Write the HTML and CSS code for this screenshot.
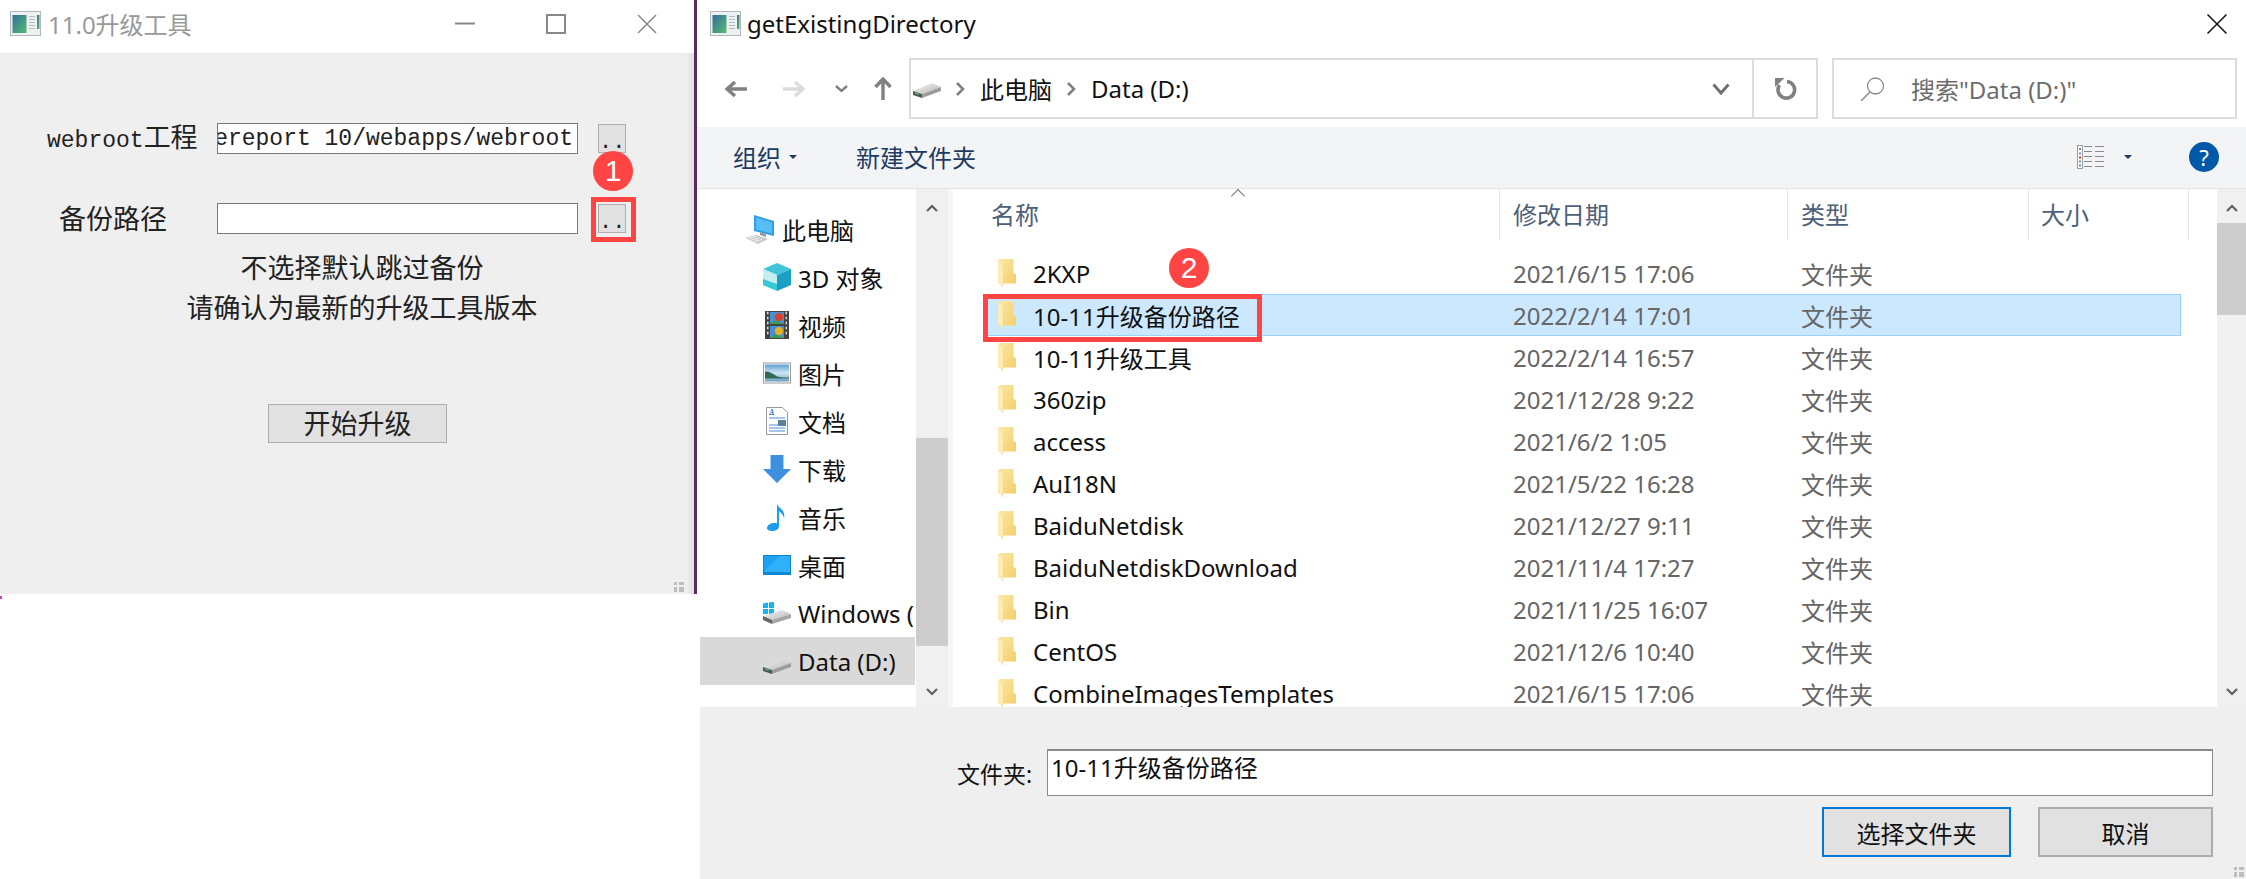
FILE: index.html
```html
<!DOCTYPE html>
<html lang="zh-CN">
<head>
<meta charset="utf-8">
<title>升级工具</title>
<link rel="stylesheet" href="styles.css">
</head>
<body>
<svg class="defs" aria-hidden="true">
  <defs>
    <linearGradient id="folderGrad" x1="0" y1="0" x2="1" y2="1">
      <stop offset="0" stop-color="#fbe7a6"/>
      <stop offset="1" stop-color="#f3cf6a"/>
    </linearGradient>
    <linearGradient id="appGrad" x1="0" y1="0" x2="1" y2="1">
      <stop offset="0" stop-color="#2f6f9c"/>
      <stop offset="1" stop-color="#58bb70"/>
    </linearGradient>
    <linearGradient id="skyGrad" x1="0" y1="0" x2="0" y2="1">
      <stop offset="0" stop-color="#5f9fd0"/>
      <stop offset="0.5" stop-color="#cfe6f4"/>
      <stop offset="1" stop-color="#6a9cc0"/>
    </linearGradient>
    <linearGradient id="driveTop" x1="0" y1="0" x2="1" y2="1">
      <stop offset="0" stop-color="#f2f2f2"/>
      <stop offset="1" stop-color="#b9b9b9"/>
    </linearGradient>
    <symbol id="app" viewBox="0 0 31 25">
      <rect x="0.5" y="0.5" width="30" height="24" fill="#eef1f2" stroke="#b0b8bc"/>
      <rect x="2.500" y="4" width="14" height="18" fill="url(#appGrad)"/>
      <rect x="27" y="4" width="2.500" height="14" fill="url(#appGrad)"/>
      <path d="M19 5.500h6M19 8.500h6M19 11.500h6M19 14.500h6M19 17.500h6" stroke="#b3bcc0" stroke-width="1.200"/>
    </symbol>
    <symbol id="folder" viewBox="0 0 18 28">
      <path d="M1 0h14.500v14l2.500 1v9.500H5z" fill="url(#folderGrad)"/>
      <path d="M0 1l5 2.500V25l-0.800 3L3 25l-3-1z" fill="#fdeeb8" stroke="#f3d98a" stroke-width="0.500"/>
    </symbol>
    <symbol id="drive" viewBox="0 0 28 15">
      <path d="M0 8L19 0l9 4-19 7z" fill="url(#driveTop)"/>
      <path d="M0 8l9 3v4l-9-3z" fill="#555"/>
      <path d="M9 11l19-7v4L9 15z" fill="#9c9c9c"/>
      <path d="M2 10l4 1.2" stroke="#3fbf5f" stroke-width="1.4"/>
    </symbol>
  </defs>
</svg>

<div class="desktop">
  <section class="tool">
    <header class="titlebar">
      <svg class="app-icon"><use href="#app"/></svg>
      <span class="tool-title">11.0升级工具</span>
      <div class="win-controls">
        <svg class="ctl" viewBox="0 0 20 20"><path d="M0 9.5h20" stroke="#888" stroke-width="2"/></svg>
        <svg class="ctl" viewBox="0 0 20 20"><rect x="1" y="1" width="18" height="18" fill="none" stroke="#888" stroke-width="2"/></svg>
        <svg class="ctl" viewBox="0 0 20 20"><path d="M1 1l18 18M19 1L1 19" stroke="#888" stroke-width="1.5"/></svg>
      </div>
    </header>
    <div class="tool-body">
      <div class="form-row">
        <label class="form-label"><span class="latin">webroot</span>工程</label>
        <div class="path-input"><span class="latin path-text">finereport 10/webapps/webroot</span></div>
        <button class="dots">..</button>
      </div>
      <div class="form-row second">
        <label class="form-label indent">备份路径</label>
        <div class="path-input"></div>
        <div class="dots-wrap">
          <button class="dots">..</button>
          <span class="red-box box-dots"></span>
          <span class="badge badge-one">1</span>
        </div>
      </div>
      <div class="hints">
        <p>不选择默认跳过备份</p>
        <p>请确认为最新的升级工具版本</p>
      </div>
      <button class="start">开始升级</button>
      <div class="grip tool-grip"><i></i><i></i><i></i><i></i></div>
    </div>
  </section>

  <section class="dialog">
    <header class="dlg-title">
      <svg class="app-icon"><use href="#app"/></svg>
      <span class="dlg-name">getExistingDirectory</span>
      <svg class="dlg-close" viewBox="0 0 20 20"><path d="M0.5 0.5l19 19M19.5 0.5l-19 19" stroke="#111" stroke-width="1.5"/></svg>
    </header>

    <div class="navbar">
      <div class="nav-btns">
        <svg class="nav-arrow" viewBox="0 0 22 18"><path d="M10 2L2 9l8 7M2 9h20" fill="none" stroke="#808080" stroke-width="3.4"/></svg>
        <svg class="nav-arrow fwd" viewBox="0 0 22 18"><path d="M12 2l8 7-8 7M20 9H0" fill="none" stroke="#dcdcdc" stroke-width="3.4"/></svg>
        <svg class="nav-chev" viewBox="0 0 13 8"><path d="M1 1l5.500 5L12 1" fill="none" stroke="#808080" stroke-width="2.400"/></svg>
        <svg class="nav-up" viewBox="0 0 18 23"><path d="M1.500 10L9 2l7.500 8M9 2v21" fill="none" stroke="#808080" stroke-width="3.400"/></svg>
      </div>
      <div class="address">
        <svg class="addr-drive"><use href="#drive"/></svg>
        <svg class="crumb-sep" viewBox="0 0 10 14"><path d="M2 1l6 6-6 6" fill="none" stroke="#808080" stroke-width="2.600"/></svg>
        <span class="crumb">此电脑</span>
        <svg class="crumb-sep" viewBox="0 0 10 14"><path d="M2 1l6 6-6 6" fill="none" stroke="#808080" stroke-width="2.600"/></svg>
        <span class="crumb">Data (D:)</span>
        <svg class="addr-drop" viewBox="0 0 18 12"><path d="M1.500 1.500L9 10l7.500-8.500" fill="none" stroke="#707070" stroke-width="3"/></svg>
        <div class="addr-refresh">
          <svg viewBox="0 0 22 22" class="refresh"><path d="M12 3.500A8.300 8.300 0 1 1 4.500 7" fill="none" stroke="#808080" stroke-width="3.600"/><path d="M0 0h9.500L0 9z" fill="#808080"/></svg>
        </div>
      </div>
      <div class="search">
        <svg class="magnifier" viewBox="0 0 25 24"><circle cx="15.500" cy="9" r="8" fill="none" stroke="#8a8a8a" stroke-width="1.300"/><path d="M10 15L1 24" stroke="#8a8a8a" stroke-width="1.500"/></svg>
        <span>搜索"Data (D:)"</span>
      </div>
    </div>

    <div class="toolbar">
      <span class="tool-btn">组织</span>
      <i class="caret"></i>
      <span class="tool-btn new-folder">新建文件夹</span>
      <svg class="view-icon" viewBox="0 0 27 24">
        <rect x="0.500" y="0.500" width="5" height="23" fill="#fff" stroke="#9a9a9a"/>
        <rect x="2" y="3" width="2" height="2" fill="#6c8aa8"/><rect x="2" y="7.500" width="2" height="2" fill="#6c8aa8"/><rect x="2" y="11.500" width="2" height="2" fill="#c0392b"/><rect x="2" y="15.500" width="2" height="2" fill="#6c8aa8"/><rect x="2" y="19.500" width="2" height="2" fill="#6c8aa8"/>
        <path d="M7 1.500h8M18 1.500h9M7 6.500h8M18 6.500h9M7 11.500h8M18 11.500h9M7 16.500h8M18 16.500h9M7 21.500h8M18 21.500h9" stroke="#8a8a8a"/>
      </svg>
      <i class="caret view-caret"></i>
      <span class="help">?</span>
    </div>

    <div class="panes">
      <nav class="tree">
        <div class="tree-item root">
          <svg class="tree-icon pc" viewBox="0 0 31 30"><path d="M9 1l20 6v15L9 17z" fill="#2f9fe8"/><path d="M11 3.500l16 5v11l-16-4z" fill="#56bdf5"/><path d="M15 18l6 2v3l-6-2z" fill="#9a9a9a"/><path d="M0 24l11-3 12 4-10 5z" fill="#c9c9c9"/><path d="M3 24.500l8-2M6 26l8-2M9 27.500l8-2" stroke="#f2f2f2"/></svg>
          <span>此电脑</span>
        </div>
        <div class="tree-item">
          <svg class="tree-icon" viewBox="0 0 28 28"><path d="M14 0l14 6-14 6L0 6z" fill="#3fc4d9"/><path d="M0 6l14 6v16L0 22z" fill="#c6eef0"/><path d="M14 12l14-6v16l-14 6z" fill="#1b9fc4"/><path d="M0 16l14 5v7L0 22z" fill="#35c9d4"/></svg>
          <span>3D 对象</span>
        </div>
        <div class="tree-item">
          <svg class="tree-icon" viewBox="0 0 28 28"><rect x="2" width="24" height="28" fill="#444"/><path d="M4 2h1.500M4 7h1.500M4 12h1.500M4 17h1.500M4 22h1.500M22.500 2H24M22.500 7H24M22.500 12H24M22.500 17H24M22.500 22H24" stroke="#ddd" stroke-width="2.500"/><rect x="7" y="1" width="14" height="12" fill="#4a90d0"/><rect x="7" y="15" width="14" height="12" fill="#4a90d0"/><circle cx="16" cy="6" r="4" fill="#e0402a"/><circle cx="16" cy="20" r="4" fill="#e8b020"/><path d="M7 13l5-4 9 4zM7 27l5-4 9 4z" fill="#3f9b4f"/></svg>
          <span>视频</span>
        </div>
        <div class="tree-item">
          <svg class="tree-icon" viewBox="0 0 28 21"><rect x="0.500" y="0.500" width="27" height="20" fill="#fff" stroke="#999"/><rect x="2" y="2" width="24" height="17" fill="url(#skyGrad)"/><path d="M2 9c5 0 8 2 12 5 4 1 8 1 12 1v1H2z" fill="#2f6a55"/></svg>
          <span>图片</span>
        </div>
        <div class="tree-item">
          <svg class="tree-icon" viewBox="0 0 22 28"><path d="M0.500 0.500h16l5 5v22H0.500z" fill="#fff" stroke="#999"/><path d="M3 7.500h5M3 11h16M3 21h16M3 24h16M3 18h9" stroke="#4a90d0" stroke-width="1"/><text class="doc-a" x="3" y="8">A</text><rect x="12" y="13" width="8" height="6" fill="#5b8296"/></svg>
          <span>文档</span>
        </div>
        <div class="tree-item">
          <svg class="tree-icon" viewBox="0 0 26 26"><path d="M7 0h12v13h7L13 26 0 13h7z" fill="#3d8fe0"/></svg>
          <span>下载</span>
        </div>
        <div class="tree-item">
          <svg class="tree-icon" viewBox="0 0 20 28"><path d="M10 0c0 5 9 6 7 15-1-4-4-6-5-7v15c0 3-3 5-7 5-3 0-5-1-5-3 0-3 4-5 7-5 1 0 2 0 3 .5z" fill="#1e9bea"/></svg>
          <span>音乐</span>
        </div>
        <div class="tree-item">
          <svg class="tree-icon" viewBox="0 0 28 20"><rect width="28" height="20" fill="#0f86d8"/><rect x="1" y="1" width="26" height="16" fill="#1ba2f5"/><path d="M1 17L16 1h11v16z" fill="#2fb0fa"/></svg>
          <span>桌面</span>
        </div>
        <div class="tree-item clip">
          <svg class="tree-icon" viewBox="0 0 28 22"><path d="M0 1.500l5-1v5.500H0zM6 .300L11 0v6H6zM0 7h5v5H0zM6 7h5v5.500L6 12z" fill="#13b4ea"/><path d="M0 14l19-6 9 4-19 6z" fill="url(#driveTop)"/><path d="M0 14l9 4v4l-9-4z" fill="#666"/><path d="M9 18l19-6v4L9 22z" fill="#a5a5a5"/></svg>
          <span>Windows (C:)</span>
        </div>
        <div class="tree-item active">
          <svg class="tree-icon drive-icon"><use href="#drive"/></svg>
          <span>Data (D:)</span>
        </div>
      </nav>
      <div class="vscroll tree-scroll">
        <svg class="sb-arrow" viewBox="0 0 12 8"><path d="M1 7l5-5 5 5" fill="none" stroke="#606060" stroke-width="2.200"/></svg>
        <div class="track"><span class="thumb tree-thumb"></span></div>
        <svg class="sb-arrow" viewBox="0 0 12 8"><path d="M1 1l5 5 5-5" fill="none" stroke="#606060" stroke-width="2.200"/></svg>
      </div>

      <div class="files">
        <div class="file-head">
          <span class="sort-mark"></span>
          <div class="col col-name">名称</div>
          <div class="col col-date">修改日期</div>
          <div class="col col-type">类型</div>
          <div class="col col-size">大小</div>
        </div>
        <div class="rows">
          <div class="row"><span class="name"><svg class="folder"><use href="#folder"/></svg>2KXP</span><span class="date">2021/6/15 17:06</span><span class="kind">文件夹</span></div>
          <div class="row selected"><span class="name"><svg class="folder"><use href="#folder"/></svg>10-11升级备份路径</span><span class="date">2022/2/14 17:01</span><span class="kind">文件夹</span><span class="red-box box-row"></span><span class="badge badge-two">2</span></div>
          <div class="row"><span class="name"><svg class="folder"><use href="#folder"/></svg>10-11升级工具</span><span class="date">2022/2/14 16:57</span><span class="kind">文件夹</span></div>
          <div class="row"><span class="name"><svg class="folder"><use href="#folder"/></svg>360zip</span><span class="date">2021/12/28 9:22</span><span class="kind">文件夹</span></div>
          <div class="row"><span class="name"><svg class="folder"><use href="#folder"/></svg>access</span><span class="date">2021/6/2 1:05</span><span class="kind">文件夹</span></div>
          <div class="row"><span class="name"><svg class="folder"><use href="#folder"/></svg>AuI18N</span><span class="date">2021/5/22 16:28</span><span class="kind">文件夹</span></div>
          <div class="row"><span class="name"><svg class="folder"><use href="#folder"/></svg>BaiduNetdisk</span><span class="date">2021/12/27 9:11</span><span class="kind">文件夹</span></div>
          <div class="row"><span class="name"><svg class="folder"><use href="#folder"/></svg>BaiduNetdiskDownload</span><span class="date">2021/11/4 17:27</span><span class="kind">文件夹</span></div>
          <div class="row"><span class="name"><svg class="folder"><use href="#folder"/></svg>Bin</span><span class="date">2021/11/25 16:07</span><span class="kind">文件夹</span></div>
          <div class="row"><span class="name"><svg class="folder"><use href="#folder"/></svg>CentOS</span><span class="date">2021/12/6 10:40</span><span class="kind">文件夹</span></div>
          <div class="row"><span class="name"><svg class="folder"><use href="#folder"/></svg>CombineImagesTemplates</span><span class="date">2021/6/15 17:06</span><span class="kind">文件夹</span></div>
        </div>
      </div>
      <div class="vscroll list-scroll">
        <svg class="sb-arrow" viewBox="0 0 12 8"><path d="M1 7l5-5 5 5" fill="none" stroke="#606060" stroke-width="2.200"/></svg>
        <div class="track"><span class="thumb list-thumb"></span></div>
        <svg class="sb-arrow" viewBox="0 0 12 8"><path d="M1 1l5 5 5-5" fill="none" stroke="#606060" stroke-width="2.200"/></svg>
      </div>
    </div>

    <footer class="dlg-foot">
      <div class="foot-field">
        <label>文件夹:</label>
        <div class="foot-input">10-11升级备份路径</div>
      </div>
      <div class="foot-actions">
        <button class="dlg-btn primary">选择文件夹</button>
        <button class="dlg-btn cancel">取消</button>
      </div>
      <div class="grip dlg-grip"><i></i><i></i><i></i><i></i></div>
    </footer>
  </section>
</div>
</body>
</html>
```
FILE: styles.css
```css
* { box-sizing: border-box; }
html, body { margin: 0; padding: 0; background: #fff; }
body { font-family: "Noto Sans", "Noto Sans CJK SC", sans-serif; color: #111; }
.defs { position: absolute; width: 0; height: 0; }
.desktop { display: flex; width: 2246px; height: 879px; overflow: hidden; align-items: flex-start; }
button { font-family: inherit; padding: 0; cursor: default; }
i { font-style: normal; display: block; }

/* upgrade tool window */
.tool { position: relative; width: 697px; height: 594px; flex: none; display: flex; flex-direction: column; border-right: 3px solid #5c2a5f; }
.tool::after { content: ""; position: absolute; left: 0; top: 596px; width: 2px; height: 3px; background: #d040c0; }
.titlebar { height: 53px; flex: none; display: flex; align-items: center; padding: 0 0 6px 10px; background: #fff; }
.app-icon { width: 31px; height: 25px; flex: none; }
.tool-title { margin-left: 7px; font-size: 24px; color: #999; }
.win-controls { margin-left: auto; display: flex; align-items: center; gap: 71px; padding-right: 37px; }
.ctl { width: 20px; height: 20px; }
.tool-body { position: relative; flex: 1; background: linear-gradient(to right, #efefef 686px, #dfdfdf 694px); padding-top: 70px; }
.form-row { display: flex; align-items: center; height: 31px; padding-left: 47px; }
.form-row.second { margin-top: 49px; }
.form-label { width: 170px; font-size: 27px; line-height: 31px; color: #222; white-space: nowrap; }
.form-label.indent { padding-left: 12px; }
.latin { font-family: "Liberation Mono", monospace; font-size: 23px; }
.path-input { width: 361px; height: 31px; background: #fff; border: 1px solid #7a7a7a; display: flex; justify-content: flex-end; align-items: center; overflow: hidden; padding-right: 4px; color: #222; }
.path-text { white-space: pre; flex: none; }
.dots { width: 28px; height: 29px; margin-left: 20px; background: #e1e1e1; border: 1px solid #adadad; font-size: 22px; font-family: "Liberation Mono", monospace; line-height: 36px; color: #222; }
.dots-wrap { position: relative; margin-left: 20px; }
.dots-wrap .dots { margin-left: 0; display: block; }
.red-box { position: absolute; border: 5px solid #ff4444; pointer-events: none; }
.box-dots { left: -7px; top: -7px; width: 45px; height: 45px; }
.badge { position: absolute; width: 40px; height: 40px; border-radius: 50%; background: #ff4444; color: #fff; font-family: "Liberation Sans", sans-serif; font-size: 30px; line-height: 40px; text-align: center; }
.badge-one { left: -5px; top: -53px; }
.hints { margin-left: 30px; margin-top: 14px; text-align: center; font-size: 27px; line-height: 40px; color: #222; }
.hints p { margin: 0; }
.start { display: block; margin: 76px 0 0 268px; width: 179px; height: 39px; background: #e1e1e1; border: 1px solid #adadad; font-size: 27px; line-height: 36px; color: #222; }
.grip { position: absolute; display: grid; grid-template-columns: 3px 5px; grid-template-rows: 3px 5px; gap: 2px; }
.grip i { background: #bdbdbd; }
.tool-grip { right: 10px; bottom: 2px; }

/* file dialog */
.dialog { flex: 1; height: 879px; display: flex; flex-direction: column; min-width: 0; }
.dlg-title { height: 53px; flex: none; display: flex; align-items: center; padding: 0 0 6px 13px; background: #fff; }
.dlg-name { margin-left: 6px; font-size: 24px; }
.dlg-close { margin-left: auto; margin-right: 19px; width: 20px; height: 20px; }
.navbar { height: 74px; flex: none; display: flex; padding-top: 5px; background: #fff; }
.nav-btns { width: 212px; height: 61px; flex: none; display: flex; align-items: center; padding-left: 28px; }
.nav-arrow { width: 22px; height: 18px; margin-right: 36px; }
.nav-arrow.fwd { margin-right: 30px; }
.nav-chev { width: 13px; height: 8px; margin-right: 26px; }
.nav-up { width: 18px; height: 23px; }
.address { width: 909px; height: 61px; flex: none; border: 2px solid #dcdcdc; display: flex; align-items: center; padding-left: 2px; }
.addr-drive { width: 28px; height: 15px; flex: none; margin-top: 4px; }
.crumb-sep { width: 10px; height: 14px; flex: none; margin: 0 15px 0 14px; }
.crumb { font-size: 24px; white-space: nowrap; }
.addr-drop { margin-left: auto; width: 18px; height: 12px; margin-right: 22px; }
.addr-refresh { width: 64px; height: 100%; border-left: 2px solid #dcdcdc; display: flex; align-items: center; justify-content: center; padding-left: 2px; }
.refresh { width: 22px; height: 22px; }
.search { margin-left: 14px; width: 405px; height: 61px; flex: none; border: 2px solid #dcdcdc; display: flex; align-items: center; padding-left: 26px; font-size: 24px; color: #6d6d6d; }
.magnifier { width: 25px; height: 24px; margin-right: 26px; }
.toolbar { height: 62px; flex: none; display: flex; align-items: center; padding: 0 0 2px 36px; background: #f3f4f6; border-bottom: 1px solid #e3e3e3; }
.tool-btn { font-size: 24px; color: #1e3a5f; }
.caret { width: 0; height: 0; margin-left: 8px; border: 4px solid transparent; border-top: 4px solid #1e3a5f; border-bottom: 0; }
.new-folder { margin-left: 59px; }
.view-icon { margin-left: auto; width: 27px; height: 24px; }
.view-caret { margin-left: 20px; border-left-width: 4px; border-right-width: 4px; }
.help { margin-left: 57px; margin-right: 27px; width: 30px; height: 30px; border-radius: 50%; background: #0058a8; color: #fff; font-size: 22px; line-height: 30px; text-align: center; }

.panes { height: 518px; flex: none; display: flex; background: #fff; }
.tree { width: 219px; flex: none; padding: 16px 1px 0 3px; overflow: hidden; }
.tree-item { position: relative; height: 48px; display: flex; align-items: center; font-size: 24px; white-space: nowrap; overflow: hidden; padding-left: 63px; }
.tree-item span { position: absolute; left: 98px; }
.tree-item.root { padding-left: 45px; }
.tree-item.root span { left: 82px; }
.tree-icon { width: 28px; height: 28px; flex: none; }
.tree-item.root .tree-icon { width: 31px; height: 30px; }
.drive-icon { height: 15px; margin-top: 10px; }
.tree-item.active { background: #d9d9d9; }
.vscroll { flex: none; display: flex; flex-direction: column; background: #f0f0f0; align-items: center; }
.tree-scroll { width: 32px; }
.list-scroll { width: 29px; }
.sb-arrow { width: 12px; height: 8px; flex: none; margin: 15px 0 11px; }
.track { flex: 1; width: 100%; position: relative; }
.thumb { display: block; width: 100%; background: #cdcdcd; }
.tree-thumb { margin-top: 215px; height: 208px; }
.list-thumb { margin-top: 0; height: 92px; }

.files { width: 1269px; flex: none; border-left: 5px solid #f6f6f6; overflow: hidden; }
.file-head { position: relative; height: 51px; display: grid; grid-template-columns: 547px 288px 241px 160px; font-size: 24px; color: #4c607a; }
.col { padding-left: 38px; height: 51px; line-height: 51px; border-right: 1px solid #e5e5e5; }
.col-date, .col-type, .col-size { padding-left: 13px; }
.col-size { padding-left: 12px; }
.sort-mark { position: absolute; left: 280px; top: 2px; width: 10px; height: 10px; border-left: 1px solid #777; border-top: 1px solid #777; transform: rotate(45deg); }
.rows { margin-top: 12px; margin-left: 32px; width: 1196px; font-size: 24px; }
.row { position: relative; height: 42px; display: grid; grid-template-columns: 527px 288px 1fr; align-items: center; border: 1px solid transparent; }
.row.selected { background: #cce8ff; border-color: #99d1ff; }
.name { display: flex; align-items: center; padding-left: 12px; white-space: nowrap; color: #111; }
.folder { width: 18px; height: 28px; margin-right: 17px; flex: none; }
.date, .kind { color: #666; white-space: nowrap; }
.box-row { left: -3px; top: -1px; width: 279px; height: 48px; }
.badge-two { left: 183px; top: -47px; }

.dlg-foot { position: relative; flex: 1; margin-left: 3px; background: #efefef; padding: 42px 33px 0 257px; }
.foot-field { display: flex; align-items: center; height: 47px; }
.foot-field label { width: 90px; font-size: 23px; }
.foot-input { flex: 1; height: 47px; background: #fff; border: 1px solid #8a8a8a; border-top-width: 2px; padding-left: 3px; font-size: 24px; line-height: 34px; }
.foot-actions { display: flex; justify-content: flex-end; gap: 27px; margin-top: 11px; }
.dlg-btn { height: 50px; background: #e1e1e1; font-size: 24px; color: #111; }
.primary { width: 189px; border: 2px solid #0078d7; }
.cancel { width: 175px; border: 2px solid #adadad; }
.dlg-grip { right: 2px; bottom: 2px; }
.doc-a { font-family: "Liberation Serif", serif; font-size: 8px; font-style: italic; font-weight: 700; fill: #2a78c8; }
```
